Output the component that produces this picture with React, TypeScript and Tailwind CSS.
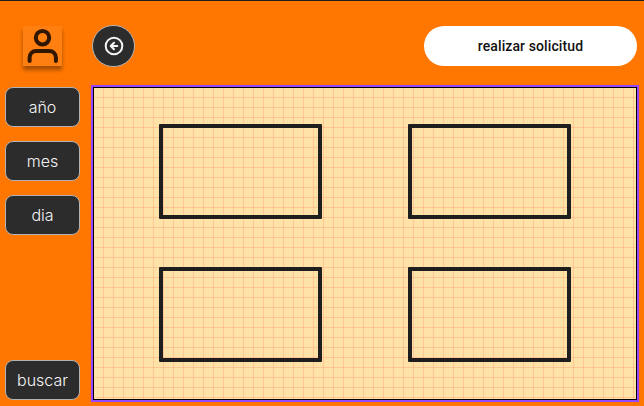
import React from "react";

function SideButton({ label, className = "" }: { label: string; className?: string }) {
  return (
    <button
      className={`h-10 w-[75px] shrink-0 rounded-lg border border-[#b3b3b3] bg-[#2c2c2c] text-center text-base leading-none font-[350] text-[#f5f5f5] ${className}`}
    >
      {label}
    </button>
  );
}

function Card() {
  return <div className="h-[95px] w-[163px] rounded-[1px] border-4 border-[#1e1e1e]" />;
}

export default function App() {
  return (
    <div className="flex h-[406px] w-[644px] flex-col overflow-hidden border-t border-[#1e1e1e] bg-[#ff7700] font-['Inter',sans-serif]">
      <header className="flex h-[84px] shrink-0 items-start pl-[23px] pr-[7px] pt-[25px]">
        <div className="h-10 w-[39px] bg-[#ff7f11] shadow-[0_4px_4px_rgba(0,0,0,0.35)]">
          <svg viewBox="0 0 39 40" className="h-10 w-[39px]" fill="none" stroke="#311600" strokeWidth="4" strokeLinecap="round">
            <ellipse cx="19.5" cy="11.7" rx="6.7" ry="6.8" />
            <path d="M6.6 35v-3.5a6.5 6.5 0 0 1 6.5-6.5h13.3a6.5 6.5 0 0 1 6.5 6.5V35" />
          </svg>
        </div>
        <button className="-mt-px ml-[30px] flex h-[42px] w-[43px] items-center justify-center rounded-full border border-[#b3b3b3] bg-[#2c2c2c]">
          <svg viewBox="0 0 20 20" className="size-5" fill="none" stroke="#f5f5f5" strokeWidth="2" strokeLinecap="round" strokeLinejoin="round">
            <circle cx="10" cy="10" r="8.3" />
            <path d="M10 6.7 6.7 10l3.3 3.3M13.3 10H6.7" />
          </svg>
        </button>
        <button className="ml-auto h-10 w-[213px] rounded-full bg-white font-['Roboto',sans-serif] text-sm font-medium tracking-[0.1px] text-[#111]">
          realizar solicitud
        </button>
      </header>
      <div className="flex">
        <nav className="flex h-[315px] w-[91px] shrink-0 flex-col gap-3.5 pl-[5px] pt-0.5">
          <SideButton label="año" />
          <SideButton label="mes" />
          <SideButton label="dia" />
          <SideButton label="buscar" className="mt-auto" />
        </nav>
        <main className="h-[317px] w-[548px] border-2 border-[#9747ff]">
          <div className="h-full border border-black bg-[#ffe2a8] bg-[linear-gradient(to_right,transparent_9px,#ff00001f_9px),linear-gradient(to_bottom,transparent_9px,#ff00001f_9px)] bg-[length:10px_10px] pl-[65px] pt-9">
            <div className="grid grid-cols-[163px_163px] gap-x-[86px] gap-y-12">
              <Card />
              <Card />
              <Card />
              <Card />
            </div>
          </div>
        </main>
      </div>
    </div>
  );
}
